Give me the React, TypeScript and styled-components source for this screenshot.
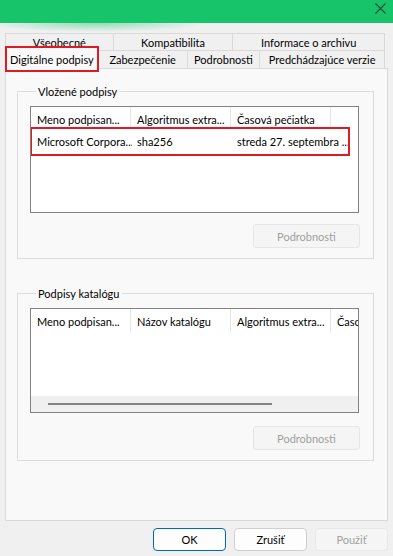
import React from 'react'
import styled, { createGlobalStyle } from 'styled-components'

const GlobalStyle = createGlobalStyle`
  html, body {
    margin: 0;
    padding: 0;
    background: #f0f0f0;
  }
  body {
    font-family: Lato, "Liberation Sans", sans-serif;
    font-size: 11px;
    color: #000;
  }
  * {
    box-sizing: border-box;
  }
`

const Window = styled.div`
  width: 393px;
  height: 556px;
  display: flex;
  flex-direction: column;
  overflow: hidden;
  background: #f0f0f0;
`

const TitleBar = styled.div`
  height: 23px;
  background: #17c46a;
  display: flex;
  justify-content: flex-end;
  align-items: flex-start;
  padding: 3px 7px 0 0;
`

const Glow = styled.div`
  height: 10px;
  background: radial-gradient(ellipse 110px 9px at 95px 0, rgba(23, 196, 106, 0.45), rgba(23, 196, 106, 0));
`

const TabStrip = styled.div`
  margin: 0 8px 0 5px;
  display: flex;
  flex-direction: column;
`

const TabRow = styled.div<{ $h: number }>`
  display: flex;
  height: ${({ $h }) => $h}px;
`

const Tab = styled.div<{ $w: number }>`
  width: ${({ $w }) => $w}px;
  display: flex;
  align-items: center;
  justify-content: center;
  border: 1px solid #d9d9d9;
  border-bottom: none;
  margin-left: -1px;
  background: #f0f0f0;
  white-space: nowrap;

  &:first-child {
    margin-left: 0;
  }
`

const ActiveTab = styled.div`
  position: relative;
  z-index: 2;
  width: 94px;
  height: 26px;
  margin: -4px 0 -4px 0;
  display: flex;
  align-items: center;
  justify-content: center;
  background: #f9f9f9;
  border: 2px solid #dc1b24;
  white-space: nowrap;
`

const Panel = styled.div`
  margin: 0 5px;
  height: 453px;
  border: 1px solid #d9d9d9;
  background: #f9f9f9;
  padding: 15px 13px 0 11px;
  display: flex;
  flex-direction: column;
`

const Group = styled.fieldset<{ $gap: number }>`
  margin: ${({ $gap }) => $gap}px 0 0 0;
  padding: 7px 14px 10px 12px;
  border: 1px solid #dcdcdc;
  min-width: 0;
  display: flex;
  flex-direction: column;
`

const Legend = styled.legend`
  margin-left: 6px;
  padding: 0 3px 0 2px;
  line-height: 15px;
`

const ListBox = styled.div<{ $h: number }>`
  height: ${({ $h }) => $h}px;
  border: 1px solid #828282;
  background: #fff;
  display: flex;
  flex-direction: column;
  overflow: hidden;
`

const HeaderRow = styled.div`
  display: flex;
  height: 24px;
  flex-shrink: 0;
`

const HeaderCell = styled.div`
  width: 100px;
  flex-shrink: 0;
  padding-left: 6px;
  display: flex;
  align-items: center;
  border-right: 1px solid #e5e5e5;
  white-space: nowrap;
  overflow: hidden;
`

const DataRow = styled.div`
  position: relative;
  display: flex;
  width: 320px;
  height: 29px;
  margin: -4px 0 0 -1px;
  border: 2px solid #dc1b24;
  background: #fff;
`

const DataCell = styled.div<{ $w: number }>`
  width: ${({ $w }) => $w}px;
  flex-shrink: 0;
  padding-left: 5px;
  display: flex;
  align-items: center;
  white-space: nowrap;
  overflow: hidden;
`

const Filler = styled.div`
  flex: 1;
`

const HScroll = styled.div`
  height: 16px;
  background: #f0f0f0;
  display: flex;
  align-items: center;
  padding-left: 17px;
`

const Thumb = styled.div`
  width: 224px;
  height: 2px;
  background: #858585;
`

const ButtonRow = styled.div<{ $gap: number }>`
  display: flex;
  justify-content: flex-end;
  margin-top: ${({ $gap }) => $gap}px;
`

const DetailsButton = styled.button`
  width: 107px;
  height: 24px;
  margin-right: -1px;
  border: 1px solid #e6e6e6;
  border-radius: 3px;
  background: #f5f5f5;
  color: #9f9f9f;
  font: inherit;
  padding: 0;
`

const Footer = styled.div`
  display: flex;
  justify-content: flex-end;
  gap: 8px;
  padding: 7px 5px 0 0;
`

const DialogButton = styled.button<{ $kind: 'default' | 'normal' | 'disabled' }>`
  width: 73px;
  height: 23px;
  padding: 0;
  font: inherit;
  border-radius: 4px;
  border: 1px solid
    ${({ $kind }) => ($kind === 'default' ? '#0067c0' : $kind === 'normal' ? '#cfcfcf' : '#e8e8e8')};
  background: ${({ $kind }) => ($kind === 'disabled' ? '#f5f5f5' : '#fdfdfd')};
  color: ${({ $kind }) => ($kind === 'disabled' ? '#a0a0a0' : '#000')};
`

const CloseIcon = () => (
  <svg width="11" height="11" viewBox="0 0 11 11">
    <path d="M0.5 0.5 L10.5 10.5 M10.5 0.5 L0.5 10.5" stroke="#1d4d33" strokeWidth="1.1" />
  </svg>
)

const App: React.FC = () => {
  return (
    <>
      <GlobalStyle />
      <Window>
        <TitleBar>
          <CloseIcon />
        </TitleBar>
        <Glow />
        <TabStrip>
          <TabRow $h={17}>
            <Tab $w={109}>Všeobecné</Tab>
            <Tab $w={121}>Kompatibilita</Tab>
            <Tab $w={153}>Informace o archivu</Tab>
          </TabRow>
          <TabRow $h={18}>
            <ActiveTab>Digitálne podpisy</ActiveTab>
            <Tab $w={90}>Zabezpečenie</Tab>
            <Tab $w={74}>Podrobnosti</Tab>
            <Tab $w={126}>Predchádzajúce verzie</Tab>
          </TabRow>
        </TabStrip>
        <Panel>
          <Group $gap={0}>
            <Legend>Vložené podpisy</Legend>
            <ListBox $h={107}>
              <HeaderRow>
                <HeaderCell>Meno podpisan...</HeaderCell>
                <HeaderCell>Algoritmus extra...</HeaderCell>
                <HeaderCell>Časová pečiatka</HeaderCell>
              </HeaderRow>
              <DataRow>
                <DataCell $w={100}>Microsoft Corpora...</DataCell>
                <DataCell $w={100}>sha256</DataCell>
                <DataCell $w={116}>streda 27. septembra ...</DataCell>
              </DataRow>
            </ListBox>
            <ButtonRow $gap={11}>
              <DetailsButton disabled>Podrobnosti</DetailsButton>
            </ButtonRow>
          </Group>
          <Group $gap={27}>
            <Legend>Podpisy katalógu</Legend>
            <ListBox $h={105}>
              <HeaderRow>
                <HeaderCell>Meno podpisan...</HeaderCell>
                <HeaderCell>Názov katalógu</HeaderCell>
                <HeaderCell>Algoritmus extra...</HeaderCell>
                <HeaderCell>Časová pečiatka</HeaderCell>
              </HeaderRow>
              <Filler />
              <HScroll>
                <Thumb />
              </HScroll>
            </ListBox>
            <ButtonRow $gap={13}>
              <DetailsButton disabled>Podrobnosti</DetailsButton>
            </ButtonRow>
          </Group>
        </Panel>
        <Footer>
          <DialogButton $kind="default">OK</DialogButton>
          <DialogButton $kind="normal">Zrušiť</DialogButton>
          <DialogButton $kind="disabled" disabled>
            Použiť
          </DialogButton>
        </Footer>
      </Window>
    </>
  )
}

export default App
